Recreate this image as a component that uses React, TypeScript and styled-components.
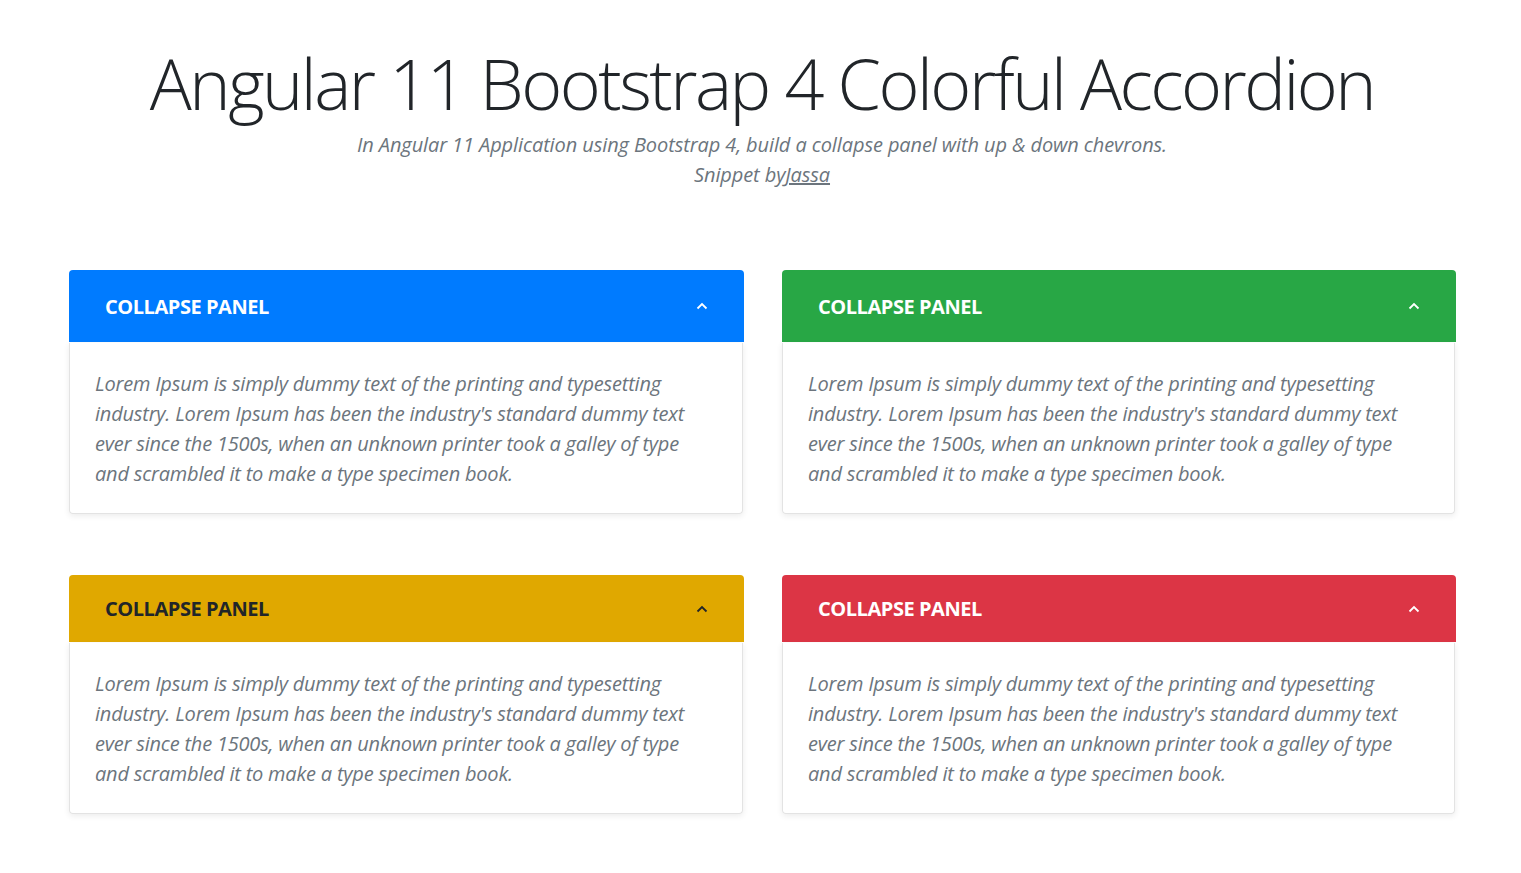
import { createGlobalStyle, styled } from "styled-components";

const GlobalStyle = createGlobalStyle`
  html, body {
    margin: 0;
    padding: 0;
    background: #fff;
  }
  body {
    font-family: "Open Sans", "Noto Sans", sans-serif;
    color: #212529;
  }
`;

const Page = styled.div`
  padding: 40px 66px 60px 69px;
`;

const Header = styled.header`
  text-align: center;
`;

const Title = styled.h1`
  margin: 0;
  font-size: 70px;
  font-weight: 300;
  line-height: 86px;
  letter-spacing: -2.5px;
  color: #212529;
`;

const Lead = styled.p`
  margin: 4px 0 0;
  font-size: 20px;
  font-style: italic;
  font-weight: 400;
  line-height: 30px;
  color: #6c757d;
  letter-spacing: -0.1px;
`;

const Link = styled.a`
  color: #6c757d;
  text-decoration: underline;
`;

const Grid = styled.div`
  display: grid;
  grid-template-columns: 675px 674px;
  column-gap: 38px;
  row-gap: 61px;
  margin-top: 80px;
`;

const Card = styled.section`
  display: flex;
  flex-direction: column;
`;

const PanelHead = styled.div<{ $bg: string; $fg: string; $h: number }>`
  height: ${(p) => p.$h}px;
  background: ${(p) => p.$bg};
  color: ${(p) => p.$fg};
  border-radius: 4px 4px 0 0;
  display: flex;
  align-items: center;
  justify-content: space-between;
  padding: 0 36px;
`;

const PanelTitle = styled.h3`
  margin: 0;
  font-size: 20px;
  font-weight: 700;
  text-transform: uppercase;
  letter-spacing: -0.45px;
`;

const Chevron = styled.svg`
  width: 12px;
  height: 8px;
`;

const PanelBody = styled.div`
  height: 171px;
  box-sizing: border-box;
  margin: 1px 1px 0 0;
  border: 1px solid #e3e3e3;
  border-top: none;
  border-radius: 0 0 4px 4px;
  box-shadow: 0 2px 6px rgba(0, 0, 0, 0.08);
  padding: 26px 25px;
`;

const Line = styled.span`
  display: block;
  white-space: nowrap;
  font-size: 20px;
  font-style: italic;
  line-height: 30px;
  color: #6c757d;
  letter-spacing: -0.2px;
`;

const lines = [
  "Lorem Ipsum is simply dummy text of the printing and typesetting",
  "industry. Lorem Ipsum has been the industry's standard dummy text",
  "ever since the 1500s, when an unknown printer took a galley of type",
  "and scrambled it to make a type specimen book.",
];

const panels = [
  { bg: "#007bff", fg: "#ffffff", h: 72 },
  { bg: "#28a745", fg: "#ffffff", h: 72 },
  { bg: "#e0a800", fg: "#212529", h: 67 },
  { bg: "#dc3545", fg: "#ffffff", h: 67 },
];

export default function App() {
  return (
    <>
      <GlobalStyle />
      <Page>
        <Header>
          <Title>Angular 11 Bootstrap 4 Colorful Accordion</Title>
          <Lead>
            In Angular 11 Application using Bootstrap 4, build a collapse panel
            with up &amp; down chevrons.
            <br />
            Snippet by<Link href="#">Jassa</Link>
          </Lead>
        </Header>
        <Grid>
          {panels.map((p, i) => (
            <Card key={i}>
              <PanelHead $bg={p.bg} $fg={p.fg} $h={p.h}>
                <PanelTitle>Collapse Panel</PanelTitle>
                <Chevron viewBox="0 0 12 8">
                  <polyline
                    points="1.5,6.5 6,2 10.5,6.5"
                    fill="none"
                    stroke="currentColor"
                    strokeWidth="1.8"
                  />
                </Chevron>
              </PanelHead>
              <PanelBody>
                {lines.map((l) => (
                  <Line key={l}>{l}</Line>
                ))}
              </PanelBody>
            </Card>
          ))}
        </Grid>
      </Page>
    </>
  );
}
